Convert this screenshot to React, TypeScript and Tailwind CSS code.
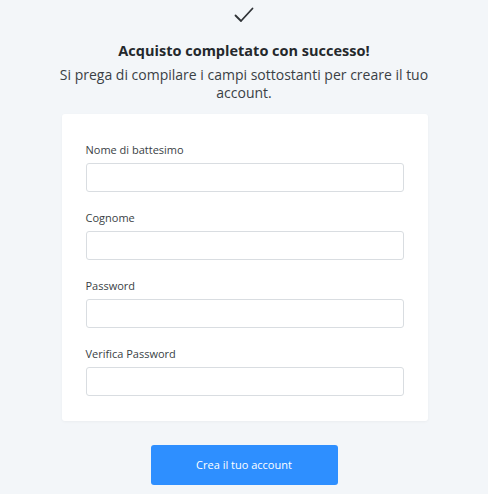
import React from "react";

const fields = ["Nome di battesimo", "Cognome", "Password", "Verifica Password"];

function Field({ label }: { label: string }) {
  return (
    <div className="flex flex-col">
      <label className="text-[11px] leading-4 text-[#3a3f45]">{label}</label>
      <input
        type={label.includes("Password") ? "password" : "text"}
        className="mt-[5px] h-[29px] w-full rounded-[3px] border border-[#d9dde1] bg-white px-2 text-[12px] outline-none"
      />
    </div>
  );
}

export default function App() {
  return (
    <div
      className="min-h-[494px] w-full bg-[#f3f6f9] text-[#2b2f33]"
      style={{ fontFamily: '"Open Sans", "Noto Sans", sans-serif' }}
    >
      <div className="flex flex-col items-center pt-[6px]">
        {/* Check icon */}
        <svg width="22" height="18" viewBox="0 0 22 18" fill="none">
          <path
            d="M2.5 9.5 L8 15 L19.5 2.5"
            stroke="#2f3337"
            strokeWidth="1.8"
            strokeLinecap="round"
            strokeLinejoin="round"
          />
        </svg>

        <h1 className="mt-[17px] text-[14.5px] font-bold leading-5 text-[#24282c]">
          Acquisto completato con successo!
        </h1>
        <p className="mt-[5px] w-[390px] text-center text-[14px] leading-[18px] text-[#3a3f45]">
          Si prega di compilare i campi sottostanti per creare il tuo account.
        </p>

        {/* Form card */}
        <div className="mt-[12px] ml-[1px] w-[366px] rounded-[3px] bg-white px-6 pt-[28px] pb-[25px] shadow-[0_1px_3px_rgba(0,0,0,0.04)]">
          <div className="flex flex-col gap-[18px]">
            {fields.map((f) => (
              <Field key={f} label={f} />
            ))}
          </div>
        </div>

        <button className="mt-6 h-10 w-[187px] rounded-[3px] bg-[#2e8fff] text-[11px] text-white">
          Crea il tuo account
        </button>
      </div>
    </div>
  );
}
